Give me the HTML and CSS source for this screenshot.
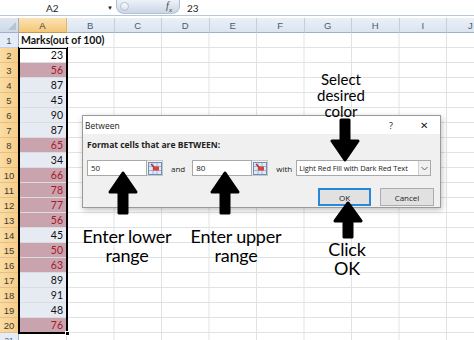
FILE: index.html
```html
<!DOCTYPE html>
<html lang="en">
	<head>
		<meta charset="utf-8">
		<title>Conditional formatting: Between</title>
		<link rel="stylesheet" href="styles.css">
	</head>
	<body>
		<div class="formula-bar">
			<div class="name-box">
				<span class="name">A2</span>
				<span class="drop">&#9660;</span>
			</div>
			<div class="fx-pill"><span class="knob"></span><span class="fx">f<sub>x</sub></span></div>
			<div class="formula">23</div>
		</div>

		<div class="sheet">
			<div class="corner"></div>
			<div class="col-head sel">A</div>
			<div class="col-heads">
				<div class="col-head">B</div>
				<div class="col-head">C</div>
				<div class="col-head">D</div>
				<div class="col-head">E</div>
				<div class="col-head">F</div>
				<div class="col-head">G</div>
				<div class="col-head">H</div>
				<div class="col-head">I</div>
				<div class="col-head">J</div>
			</div>

			<div class="row-heads">
				<div class="row-head">1</div>
				<div class="row-head sel">2</div>
				<div class="row-head sel">3</div>
				<div class="row-head sel">4</div>
				<div class="row-head sel">5</div>
				<div class="row-head sel">6</div>
				<div class="row-head sel">7</div>
				<div class="row-head sel">8</div>
				<div class="row-head sel">9</div>
				<div class="row-head sel">10</div>
				<div class="row-head sel">11</div>
				<div class="row-head sel">12</div>
				<div class="row-head sel">13</div>
				<div class="row-head sel">14</div>
				<div class="row-head sel">15</div>
				<div class="row-head sel">16</div>
				<div class="row-head sel">17</div>
				<div class="row-head sel">18</div>
				<div class="row-head sel">19</div>
				<div class="row-head sel">20</div>
				<div class="row-head last">21</div>
			</div>

			<div class="col-a">
				<div class="cell title">Marks(out of 100)</div>
				<div class="selection">
					<div class="cell active">23</div>
					<div class="cell hit">56</div>
					<div class="cell">87</div>
					<div class="cell">45</div>
					<div class="cell">90</div>
					<div class="cell">87</div>
					<div class="cell hit">65</div>
					<div class="cell">34</div>
					<div class="cell hit">66</div>
					<div class="cell hit">78</div>
					<div class="cell hit">77</div>
					<div class="cell hit">56</div>
					<div class="cell">45</div>
					<div class="cell hit">50</div>
					<div class="cell hit">63</div>
					<div class="cell">89</div>
					<div class="cell">91</div>
					<div class="cell">48</div>
					<div class="cell hit">76</div>
				</div>
				<div class="cell"></div>
			</div>

			<div class="grid-area"></div>
		</div>

		<div class="dialog">
			<div class="dialog-title">
				<span>Between</span>
				<span class="title-btns"><span class="help">?</span><span class="close">&#10005;</span></span>
			</div>
			<div class="dialog-body">
				<div class="prompt">Format cells that are BETWEEN:</div>
				<div class="fields">
					<div class="input">50</div>
					<span class="ref-btn">
						<svg width="14" height="13" viewBox="0 0 14 13">
							<rect x="0.5" y="0.5" width="13" height="12" fill="#dfe9f6" stroke="#6d8fb8"/>
							<path d="M1 4.5h12M1 8.5h12M5 1v11M9 1v11" stroke="#9fb6d3" stroke-width="1"/>
							<rect x="5" y="4.5" width="6" height="4" fill="#e03c3c"/>
							<path d="M3 2l3 3" stroke="#b0282c" stroke-width="1.4"/>
						</svg>
					</span>
					<span class="word and">and</span>
					<div class="input">80</div>
					<span class="ref-btn">
						<svg width="14" height="13" viewBox="0 0 14 13">
							<rect x="0.5" y="0.5" width="13" height="12" fill="#dfe9f6" stroke="#6d8fb8"/>
							<path d="M1 4.5h12M1 8.5h12M5 1v11M9 1v11" stroke="#9fb6d3" stroke-width="1"/>
							<rect x="5" y="4.5" width="6" height="4" fill="#e03c3c"/>
							<path d="M3 2l3 3" stroke="#b0282c" stroke-width="1.4"/>
						</svg>
					</span>
					<span class="word with">with</span>
					<div class="select">
						<span class="select-text">Light Red Fill with Dark Red Text</span>
						<span class="chevron">
							<svg width="7" height="5" viewBox="0 0 7 5"><path d="M0.5 1l3 3 3-3" fill="none" stroke="#606060" stroke-width="1"/></svg>
						</span>
					</div>
				</div>
				<div class="buttons">
					<div class="btn ok">OK</div>
					<div class="btn">Cancel</div>
				</div>
			</div>
		</div>

		<!-- annotations -->
		<svg class="arrow arrow-lower" width="30" height="44" viewBox="0 0 30 44"><path d="M15 2L28 21H19V42H11V21H2Z"/></svg>
		<svg class="arrow arrow-upper" width="30" height="44" viewBox="0 0 30 44"><path d="M15 2L28 21H19V42H11V21H2Z"/></svg>
		<svg class="arrow arrow-color" width="30" height="44" viewBox="0 0 30 44"><path d="M15 2L28 21H19V42H11V21H2Z"/></svg>
		<svg class="arrow arrow-ok" width="30" height="38" viewBox="0 0 30 38"><path d="M15 2L28 20H19V36H11V20H2Z"/></svg>

		<div class="note note-lower">Enter lower<br>range</div>
		<div class="note note-upper">Enter upper<br>range</div>
		<div class="note note-color">Select<br>desired<br>color</div>
		<div class="note note-ok">Click<br>OK</div>
	</body>
</html>
```

FILE: styles.css
```css
body {
	margin: 0;
	width: 474px;
	height: 340px;
	overflow: hidden;
	position: relative;
	background: #fff;
	font-family: 'Lato', 'Open Sans', sans-serif;
	color: #000;
}

/* formula bar */
.formula-bar {
	display: flex;
	height: 15px;
	border-bottom: 1px solid #b9c6d8;
	font-size: 10px;
}

.name-box {
	width: 116px;
	display: flex;
	align-items: center;
}

.name {
	margin-left: 46px;
	color: #222;
}

.drop {
	margin-left: auto;
	margin-right: 3px;
	font-size: 6px;
	color: #222;
}

.fx-pill {
	width: 64px;
	height: 14px;
	border-radius: 0 0 8px 8px;
	background: linear-gradient(#eef2f8, #cbd6e5);
	border: 1px solid #b3c1d4;
	border-top: none;
	box-sizing: border-box;
	display: flex;
	align-items: center;
	padding: 0 7px 0 3px;
}

.knob {
	width: 9px;
	height: 9px;
	border-radius: 50%;
	background: linear-gradient(#ffffff, #d5deea);
	border: 1px solid #b3c1d4;
	box-sizing: border-box;
}

.fx {
	margin-left: auto;
	font-family: 'Liberation Serif', serif;
	font-style: italic;
	font-size: 10px;
	color: #444;
}

.fx sub {
	font-size: 7px;
}

.formula {
	padding-left: 7px;
	display: flex;
	align-items: center;
	color: #222;
}

/* sheet */
.sheet {
	margin-top: 2px;
	display: grid;
	grid-template-columns: 19px 48px 1fr;
	grid-template-rows: 15px auto;
	font-size: 10px;
}

.corner {
	background: linear-gradient(#dfe6f0, #cfd9e6);
	border-right: 1px solid #9eb1c8;
	border-bottom: 1px solid #9eb1c8;
	box-sizing: border-box;
	position: relative;
}

.corner::after {
	content: "";
	position: absolute;
	right: 2px;
	bottom: 2px;
	border-left: 8px solid transparent;
	border-bottom: 8px solid #b6c3d3;
}

.col-heads {
	display: flex;
}

.col-head {
	flex: 0 0 47.5px;
	height: 15px;
	box-sizing: border-box;
	display: flex;
	align-items: center;
	justify-content: center;
	background: linear-gradient(#eaf0f8, #dbe4ef);
	border-right: 1px solid #c2cfdf;
	border-bottom: 1px solid #9eb1c8;
	color: #4b5a6e;
	font-family: 'Liberation Sans', sans-serif;
	font-size: 9.5px;
}

.col-head.sel {
	background: linear-gradient(#fbe2b4, #f5c777);
	border-right-color: #e3b462;
	border-bottom-color: #c29a5a;
	color: #3b3b3b;
}

.row-head {
	height: 15px;
	box-sizing: border-box;
	display: flex;
	align-items: center;
	justify-content: center;
	background: #e4ecf7;
	border-bottom: 1px solid #c2cfdf;
	border-right: 1px solid #9eb1c8;
	color: #4b5a6e;
	font-family: 'Liberation Sans', sans-serif;
	font-size: 9.5px;
}

.row-head.last {
	font-size: 8px;
}

.row-head.sel {
	background: linear-gradient(to right, #fbdca4, #f6cd85);
	border-bottom-color: #e3c088;
	border-right-color: #c29a5a;
	color: #3b3b3b;
}

.col-a {
	display: flex;
	flex-direction: column;
}

.cell {
	height: 15px;
	box-sizing: border-box;
	border-bottom: 1px solid #dadcdd;
	border-right: 1px solid #dadcdd;
	text-align: right;
	padding-right: 3px;
	line-height: 14px;
	font-size: 10.5px;
	background: #e6eaf3;
	color: #111;
}

.cell.title {
	background: #fff;
	text-align: left;
	padding-left: 2px;
	font-weight: 700;
	white-space: nowrap;
	border-right: none;
	position: relative;
	z-index: 1;
}

.col-a > .cell:last-child {
	background: #fff;
}

.cell.active {
	background: #fff;
}

.cell.hit {
	background: #c9a3ae;
	color: #a8182a;
}

.selection {
	position: relative;
	outline: 2px solid #000;
	outline-offset: -1px;
}

.selection::after {
	content: "";
	position: absolute;
	right: -3px;
	bottom: -3px;
	width: 5px;
	height: 5px;
	background: #000;
	border: 1px solid #fff;
	box-sizing: border-box;
}

.grid-area {
	background:
		linear-gradient(to right, transparent 46.5px, #e0e2e4 0) 0 0 / 47.5px 100%,
		linear-gradient(to bottom, transparent 14px, #e0e2e4 0) 0 0 / 100% 15px;
}

/* dialog */
.dialog {
	position: absolute;
	left: 82px;
	top: 115px;
	width: 359px;
	height: 93px;
	box-sizing: border-box;
	border: 1px solid #9a9a9a;
	background: #f0f0f0;
	box-shadow: 1px 2px 6px rgba(0, 0, 0, 0.25);
	font-family: 'Open Sans', sans-serif;
	font-size: 8px;
	color: #222;
	z-index: 2;
}

.dialog-title {
	height: 18px;
	background: #fff;
	display: flex;
	align-items: center;
	padding-left: 2px;
	font-size: 8.5px;
}

.title-btns {
	margin-left: auto;
	display: flex;
	align-items: center;
}

.help {
	font-size: 9px;
	margin-right: 27px;
}

.close {
	font-size: 10px;
	margin-right: 12px;
}

.dialog-body {
	padding: 4px 5px 0 4px;
}

.prompt {
	font-weight: 700;
	font-size: 8.5px;
	height: 14px;
	line-height: 14px;
}

.fields {
	margin-top: 8px;
	display: flex;
	align-items: center;
	height: 16px;
}

.input {
	width: 60px;
	height: 16px;
	box-sizing: border-box;
	background: #fff;
	border: 1px solid #a9a9a9;
	padding-left: 3px;
	line-height: 14px;
	font-size: 8px;
}

.ref-btn {
	width: 16px;
	height: 16px;
	box-sizing: border-box;
	border: 1px solid #c6c6c6;
	border-left: none;
	background: #f3f3f3;
	display: flex;
	align-items: center;
	justify-content: center;
}

.word.and {
	margin: 0 7px 0 8px;
}

.word.with {
	margin: 0 4px 0 8px;
}

.select {
	width: 135px;
	height: 16px;
	box-sizing: border-box;
	background: #fff;
	border: 1px solid #a9a9a9;
	display: flex;
	align-items: center;
	font-size: 7.5px;
	letter-spacing: -0.1px;
}

.select-text {
	padding-left: 2px;
	white-space: nowrap;
	overflow: hidden;
	flex: 1;
}

.chevron {
	width: 11px;
	height: 14px;
	border-left: 1px solid #d0d0d0;
	background: #f0f0f0;
	display: flex;
	align-items: center;
	justify-content: center;
}

.buttons {
	margin-top: 12px;
	display: flex;
	justify-content: flex-end;
	gap: 9px;
	padding-right: 1px;
}

.btn {
	width: 54px;
	height: 18px;
	box-sizing: border-box;
	background: #e1e1e1;
	border: 1px solid #adadad;
	display: flex;
	align-items: center;
	justify-content: center;
	font-size: 8px;
}

.btn.ok {
	width: 53px;
	border: 2px solid #2a86d6;
}

/* annotations */
.arrow {
	position: absolute;
	z-index: 3;
}

.arrow path {
	fill: #000;
	stroke: #000;
	stroke-width: 3;
	stroke-linejoin: round;
}

.arrow-lower {
	left: 108px;
	top: 171px;
}

.arrow-upper {
	left: 210px;
	top: 171px;
}

.arrow-color {
	left: 330px;
	top: 118px;
	transform: rotate(180deg);
}

.arrow-ok {
	left: 333px;
	top: 201px;
}

.note {
	position: absolute;
	z-index: 3;
	font-family: 'Lato', sans-serif;
	font-size: 18px;
	line-height: 19px;
	text-align: center;
	letter-spacing: -0.2px;
	color: #000;
}

.note-lower {
	left: 77px;
	top: 227px;
	width: 100px;
}

.note-upper {
	left: 186px;
	top: 227px;
	width: 100px;
}

.note-color {
	left: 300px;
	top: 71px;
	width: 82px;
	font-size: 15px;
	line-height: 16px;
	letter-spacing: 0;
}

.note-ok {
	left: 307px;
	top: 240px;
	width: 80px;
}
```
